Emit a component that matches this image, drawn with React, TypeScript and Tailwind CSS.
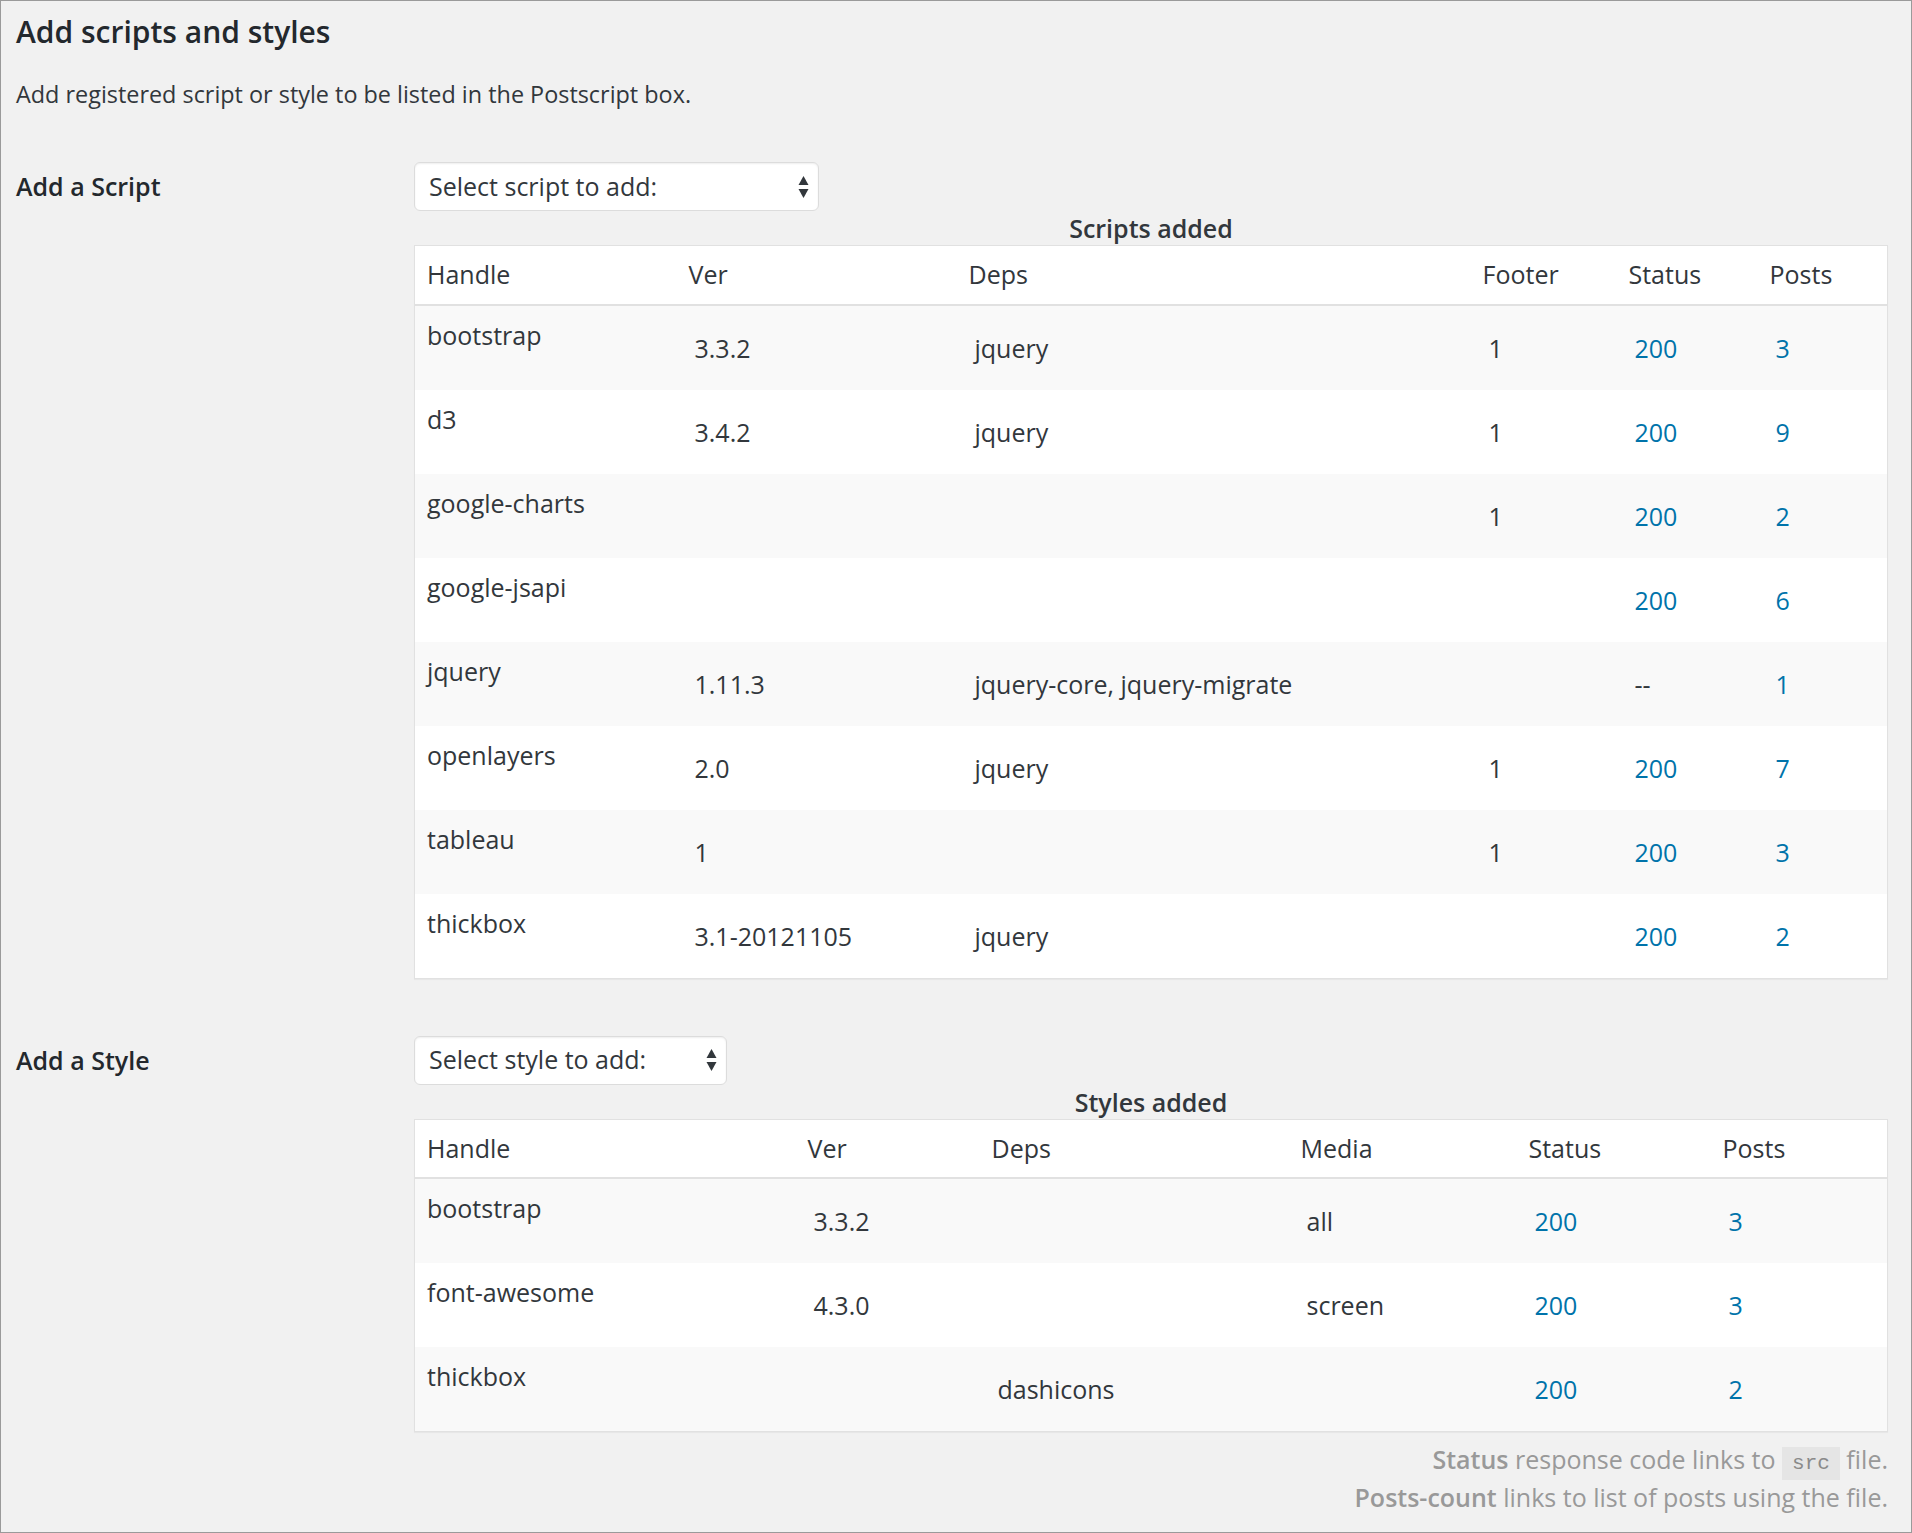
import React from "react";

type ScriptRow = { handle: string; ver: string; deps: string; footer: string; status: string; posts: string };
type StyleRow = { handle: string; ver: string; deps: string; media: string; status: string; posts: string };

const scripts: ScriptRow[] = [
  { handle: "bootstrap", ver: "3.3.2", deps: "jquery", footer: "1", status: "200", posts: "3" },
  { handle: "d3", ver: "3.4.2", deps: "jquery", footer: "1", status: "200", posts: "9" },
  { handle: "google-charts", ver: "", deps: "", footer: "1", status: "200", posts: "2" },
  { handle: "google-jsapi", ver: "", deps: "", footer: "", status: "200", posts: "6" },
  { handle: "jquery", ver: "1.11.3", deps: "jquery-core, jquery-migrate", footer: "", status: "--", posts: "1" },
  { handle: "openlayers", ver: "2.0", deps: "jquery", footer: "1", status: "200", posts: "7" },
  { handle: "tableau", ver: "1", deps: "", footer: "1", status: "200", posts: "3" },
  { handle: "thickbox", ver: "3.1-20121105", deps: "jquery", footer: "", status: "200", posts: "2" },
];

const styles: StyleRow[] = [
  { handle: "bootstrap", ver: "3.3.2", deps: "", media: "all", status: "200", posts: "3" },
  { handle: "font-awesome", ver: "4.3.0", deps: "", media: "screen", status: "200", posts: "3" },
  { handle: "thickbox", ver: "", deps: "dashicons", media: "", status: "200", posts: "2" },
];

// flechas arriba/abajo del select
function SelectArrows() {
  return (
    <svg width="11" height="24" viewBox="0 0 11 24" className="text-[#32373c]">
      <path d="M5.5 1 L10.5 10 L0.5 10 Z" fill="currentColor" />
      <path d="M5.5 23 L10.5 14 L0.5 14 Z" fill="currentColor" />
    </svg>
  );
}

function FakeSelect({ label, width }: { label: string; width: string }) {
  return (
    <div
      className={`${width} h-[49px] bg-white border border-[#dcdcdc] rounded-[6px] shadow-[inset_0_1px_2px_rgba(0,0,0,0.07)] flex items-center justify-between pl-[14px] pr-[9px] text-[25px] text-[#32373c]`}
    >
      <span>{label}</span>
      <SelectArrows />
    </div>
  );
}

const th = "text-left font-normal pl-[12px] pr-2 h-[59px] align-middle text-[#32373c]";
const tdHandle = "pl-[12px] pr-2 pt-[12px] pb-[38px] leading-[34px] align-top";
const td = "pl-[18px] pr-2 align-middle leading-[34px]";
const link = "text-[#0073aa]";

export default function App() {
  return (
    <div
      className="w-[1912px] h-[1533px] bg-[#f1f1f1] border border-[#9a9a9a] text-[#32373c] pl-[15px] pr-[23px] pt-[7px]"
      style={{ fontFamily: '"Open Sans", "Noto Sans", sans-serif' }}
    >
      {/* Título */}
      <h2 className="text-[30px] font-semibold text-[#23282d] leading-[48px]">Add scripts and styles</h2>
      <p className="text-[23.4px] leading-[30px] mt-[23px]">Add registered script or style to be listed in the Postscript box.</p>

      {/* Scripts */}
      <div className="flex mt-[53px]">
        <div className="w-[398px] shrink-0 pt-[7px] text-[25px] font-semibold text-[#23282d] leading-[34px]">Add a Script</div>
        <div className="flex-1">
          <FakeSelect label="Select script to add:" width="w-[405px]" />
          <div className="text-center text-[25px] font-semibold leading-[34px] text-[#32373c]">Scripts added</div>
          <table className="w-full table-fixed bg-white border border-[#e1e1e1] shadow-[0_1px_1px_rgba(0,0,0,0.04)] text-[25px] border-collapse">
            <colgroup>
              <col className="w-[262px]" />
              <col className="w-[280px]" />
              <col className="w-[514px]" />
              <col className="w-[146px]" />
              <col className="w-[141px]" />
              <col />
            </colgroup>
            <thead>
              <tr className="border-b-2 border-[#e1e1e1]">
                <th className={th}>Handle</th>
                <th className={th}>Ver</th>
                <th className={th}>Deps</th>
                <th className={th}>Footer</th>
                <th className={th}>Status</th>
                <th className={th}>Posts</th>
              </tr>
            </thead>
            <tbody>
              {scripts.map((s, i) => (
                <tr key={s.handle} className={i % 2 === 0 ? "bg-[#f9f9f9]" : "bg-white"}>
                  <td className={tdHandle}>{s.handle}</td>
                  <td className={td}>{s.ver}</td>
                  <td className={td}>{s.deps}</td>
                  <td className={td}>{s.footer}</td>
                  <td className={td}>
                    {s.status === "--" ? <span>--</span> : <span className={link}>{s.status}</span>}
                  </td>
                  <td className={td}>
                    <span className={link}>{s.posts}</span>
                  </td>
                </tr>
              ))}
            </tbody>
          </table>
        </div>
      </div>

      {/* Styles */}
      <div className="flex mt-[57px]">
        <div className="w-[398px] shrink-0 pt-[7px] text-[25px] font-semibold text-[#23282d] leading-[34px]">Add a Style</div>
        <div className="flex-1">
          <FakeSelect label="Select style to add:" width="w-[313px]" />
          <div className="text-center text-[25px] font-semibold leading-[34px] text-[#32373c]">Styles added</div>
          <table className="w-full table-fixed bg-white border border-[#e1e1e1] shadow-[0_1px_1px_rgba(0,0,0,0.04)] text-[25px] border-collapse">
            <colgroup>
              <col className="w-[381px]" />
              <col className="w-[184px]" />
              <col className="w-[309px]" />
              <col className="w-[228px]" />
              <col className="w-[194px]" />
              <col />
            </colgroup>
            <thead>
              <tr className="border-b-2 border-[#e1e1e1]">
                <th className={th}>Handle</th>
                <th className={th}>Ver</th>
                <th className={th}>Deps</th>
                <th className={th}>Media</th>
                <th className={th}>Status</th>
                <th className={th}>Posts</th>
              </tr>
            </thead>
            <tbody>
              {styles.map((s, i) => (
                <tr key={s.handle} className={i % 2 === 0 ? "bg-[#f9f9f9]" : "bg-white"}>
                  <td className={tdHandle}>{s.handle}</td>
                  <td className={td}>{s.ver}</td>
                  <td className={td}>{s.deps}</td>
                  <td className={td}>{s.media}</td>
                  <td className={td}>
                    <span className={link}>{s.status}</span>
                  </td>
                  <td className={td}>
                    <span className={link}>{s.posts}</span>
                  </td>
                </tr>
              ))}
            </tbody>
          </table>

          {/* Notas */}
          <div className="text-right text-[25px] text-[#999999] leading-[38px] mt-[8px]">
            <p className="h-[38px]">
              <b className="font-semibold">Status</b> response code links to{" "}
              <code className="bg-[#e5e5e5] px-[10px] py-[5px] text-[21px] leading-[20px] font-['Liberation_Mono',monospace] text-[#8a8a8a]">src</code> file.
            </p>
            <p className="h-[38px]">
              <b className="font-semibold">Posts-count</b> links to list of posts using the file.
            </p>
          </div>
        </div>
      </div>
    </div>
  );
}
